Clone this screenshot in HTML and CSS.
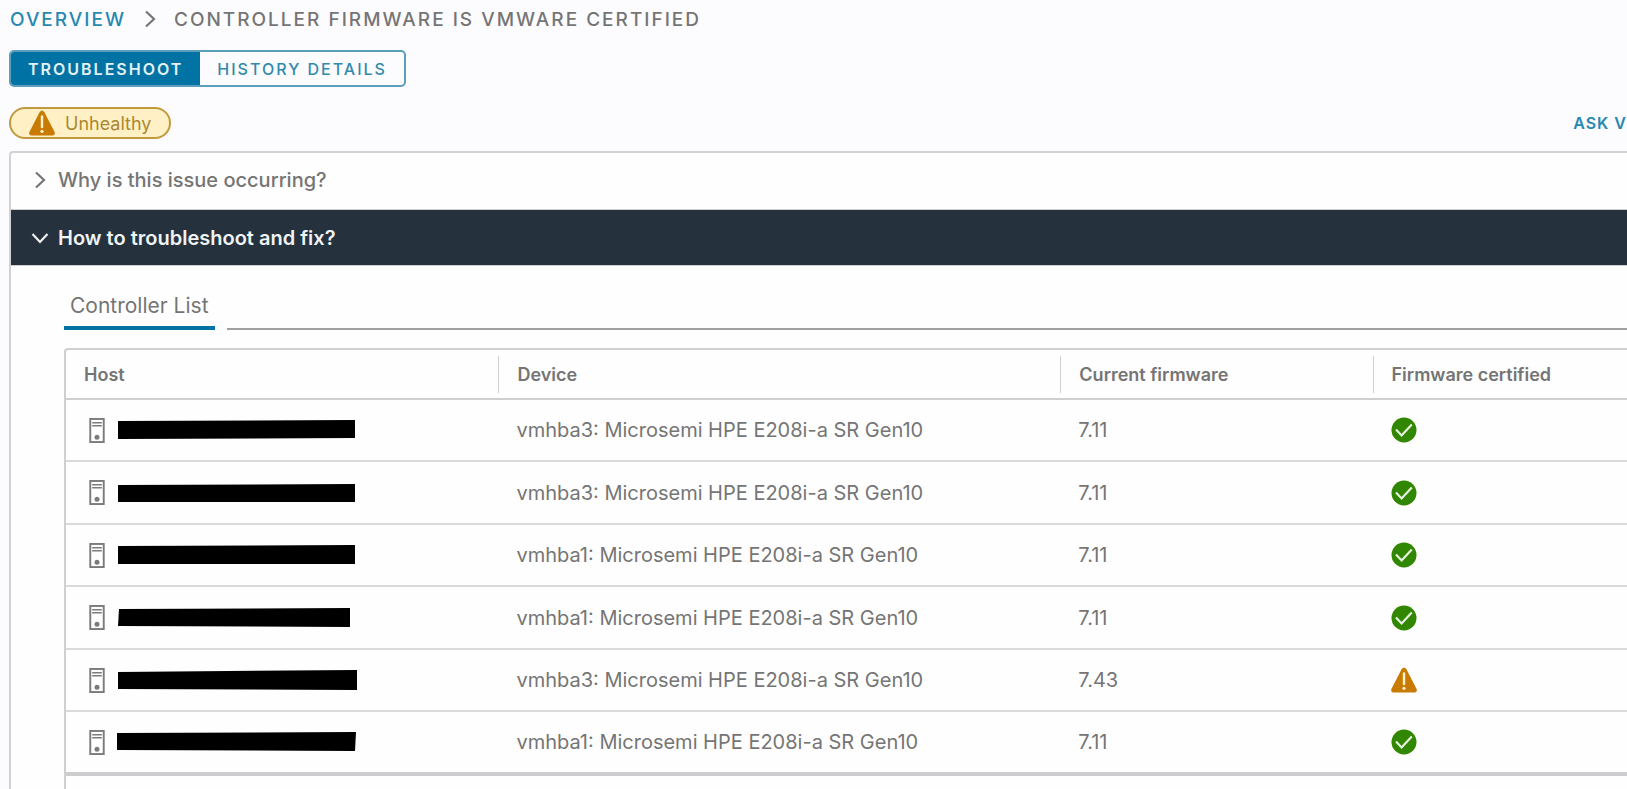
FILE: index.html
```html
<!DOCTYPE html>
<html lang="en">
<head>
    <meta charset="UTF-8">
    <meta name="viewport" content="width=device-width, initial-scale=1.0">
    <title>Controller firmware is VMware certified</title>
    <link rel="stylesheet" href="styles.css">
</head>
<body>
    <svg class="sprite" aria-hidden="true">
        <symbol id="host" viewBox="0 0 16 26">
            <rect x="1" y="1" width="14" height="24" fill="#fff" stroke="#7b7b7b" stroke-width="2"/>
            <path d="M3 5h10M3 8h10" stroke="#7b7b7b" stroke-width="1.6"/>
            <circle cx="8" cy="20" r="2.6" fill="#7b7b7b"/>
        </symbol>
        <symbol id="ok" viewBox="0 0 26 26">
            <circle cx="13" cy="13" r="12.5" fill="#318700"/>
            <path d="M5 12.500l5.600 6L20.800 7.500" fill="none" stroke="#e6f3df" stroke-width="2.200"/>
        </symbol>
        <symbol id="warn" viewBox="0 0 26 26">
            <path d="M10.700 2Q13-1 15.300 2L25.600 22Q26.500 25.500 23.500 25.500H2.500Q-.5 25.500.4 22Z" fill="#c87b00"/>
            <path d="M13 6.500v10.500" stroke="#fff3cf" stroke-width="2.400" stroke-linecap="round"/>
            <circle cx="13" cy="21.300" r="1.600" fill="#fff3cf"/>
        </symbol>
        <symbol id="angle" viewBox="0 0 18 18">
            <path d="M5 1.500l8 7.500-8 7.500" fill="none" stroke="currentColor" stroke-width="2.200"/>
        </symbol>
    </svg>

    <nav class="breadcrumb">
        <a href="#">OVERVIEW</a>
        <svg class="angle"><use href="#angle"/></svg>
        <span>CONTROLLER FIRMWARE IS VMWARE CERTIFIED</span>
    </nav>

    <div class="btn-group">
        <button class="btn active">TROUBLESHOOT</button>
        <button class="btn">HISTORY DETAILS</button>
    </div>

    <div class="status-bar">
        <span class="label-warning"><svg class="icon"><use href="#warn"/></svg>Unhealthy</span>
        <a href="#" class="ask">ASK V</a>
    </div>

    <main class="accordion">
        <button class="panel-header"><svg class="angle"><use href="#angle"/></svg>Why is this issue occurring?</button>
        <button class="panel-header open" aria-expanded="true"><svg class="angle"><use href="#angle"/></svg>How to troubleshoot and fix?</button>
        <div class="panel-content">
            <div class="tabs">
                <button class="tab">Controller List</button>
                <div class="tab-line"></div>
            </div>
            <div class="datagrid">
                <table>
                    <thead>
                        <tr>
                            <th class="col-host"><span>Host</span></th>
                            <th class="col-device"><span>Device</span></th>
                            <th class="col-current"><span>Current firmware</span></th>
                            <th><span>Firmware certified</span></th>
                        </tr>
                    </thead>
                    <tbody>
                        <tr>
                            <td><div class="host"><svg class="host-icon"><use href="#host"/></svg><svg class="redacted"><path d="M1 2L238 1V19L1 20Z"/></svg></div></td>
                            <td>vmhba3: Microsemi HPE E208i-a SR Gen10</td>
                            <td>7.11</td>
                            <td><svg class="icon"><use href="#ok"/></svg></td>
                        </tr>
                        <tr>
                            <td><div class="host"><svg class="host-icon"><use href="#host"/></svg><svg class="redacted"><path d="M1 3L238 2V20H1Z"/></svg></div></td>
                            <td>vmhba3: Microsemi HPE E208i-a SR Gen10</td>
                            <td>7.11</td>
                            <td><svg class="icon"><use href="#ok"/></svg></td>
                        </tr>
                        <tr>
                            <td><div class="host"><svg class="host-icon"><use href="#host"/></svg><svg class="redacted"><path d="M1 2L238 1V20H1Z"/></svg></div></td>
                            <td>vmhba1: Microsemi HPE E208i-a SR Gen10</td>
                            <td>7.11</td>
                            <td><svg class="icon"><use href="#ok"/></svg></td>
                        </tr>
                        <tr>
                            <td><div class="host"><svg class="host-icon"><use href="#host"/></svg><svg class="redacted"><path d="M2 2L233 1V20L1 19Z"/></svg></div></td>
                            <td>vmhba1: Microsemi HPE E208i-a SR Gen10</td>
                            <td>7.11</td>
                            <td><svg class="icon"><use href="#ok"/></svg></td>
                        </tr>
                        <tr>
                            <td><div class="host"><svg class="host-icon"><use href="#host"/></svg><svg class="redacted"><path d="M1 3L240 1V21L1 20Z"/></svg></div></td>
                            <td>vmhba3: Microsemi HPE E208i-a SR Gen10</td>
                            <td>7.43</td>
                            <td><svg class="icon"><use href="#warn"/></svg></td>
                        </tr>
                        <tr>
                            <td><div class="host"><svg class="host-icon"><use href="#host"/></svg><svg class="redacted"><path d="M0 2L239 1L238 20L0 19Z"/></svg></div></td>
                            <td>vmhba1: Microsemi HPE E208i-a SR Gen10</td>
                            <td>7.11</td>
                            <td><svg class="icon"><use href="#ok"/></svg></td>
                        </tr>
                    </tbody>
                </table>
            </div>
        </div>
    </main>
</body>
</html>
```

FILE: styles.css
```css
* {
    box-sizing: border-box;
}
body {
    display: flex;
    flex-direction: column;
    min-height: 100vh;
    margin: 0;
    padding: 0 0 0 9px;
    background-color: #fcfcff;
    color: #757575;
    font-family: Inter, "Liberation Sans", sans-serif;
    font-size: 20px;
}
a {
    color: #2788b0;
    text-decoration: none;
}
button {
    border: none;
    background: none;
    color: inherit;
    font: inherit;
    cursor: pointer;
}
.sprite {
    position: absolute;
    width: 0;
    height: 0;
}
.angle {
    width: 18px;
    height: 18px;
    flex-shrink: 0;
}
.icon {
    display: block;
    width: 26px;
    height: 26px;
}

.breadcrumb {
    display: flex;
    align-items: center;
    gap: 15px;
    height: 38px;
    padding-left: 1px;
    font-size: 19px;
    font-weight: 500;
    letter-spacing: 2px;
}

.btn-group {
    display: flex;
    align-self: flex-start;
    margin-top: 12px;
    height: 37px;
    border: 2px solid #5c9fbc;
    border-radius: 5px;
    overflow: hidden;
}
.btn {
    padding: 0 17px;
    color: #2f8aad;
    font-size: 16px;
    font-weight: 500;
    letter-spacing: 2px;
}
.btn.active {
    background-color: #0072a3;
    color: #e3f2f8;
    font-weight: 600;
}

.status-bar {
    display: flex;
    justify-content: space-between;
    align-items: center;
    height: 32px;
    margin: 20px 0 12px;
}
.label-warning {
    display: flex;
    align-items: center;
    gap: 10px;
    height: 32px;
    padding: 0 18px;
    border: 2px solid #c09a3c;
    border-radius: 16px;
    background-color: #fff1c5;
    color: #ac8732;
    font-size: 18px;
}
.ask {
    font-size: 16px;
    font-weight: 600;
    letter-spacing: 1px;
}

.accordion {
    display: flex;
    flex-direction: column;
    flex: 1;
    border: 1px solid #d2d2d4;
    border-width: 2px 0 0 2px;
    border-top-left-radius: 4px;
    background-color: #fefefe;
}
.panel-header {
    display: flex;
    align-items: center;
    gap: 9px;
    height: 57px;
    padding: 0 20px 2px;
    border-bottom: 1px solid #cfcfd2;
    font-weight: 500;
    text-align: left;
}
.panel-header.open {
    height: 56px;
    padding-bottom: 0;
    background-color: #25313d;
    color: #f0f2f4;
    font-weight: 600;
}
.panel-header.open .angle {
    transform: rotate(90deg);
}
.panel-content {
    display: flex;
    flex-direction: column;
    flex: 1;
    padding: 19px 0 0 53px;
}

.tabs {
    display: flex;
    gap: 12px;
}
.tab {
    height: 45px;
    padding: 0 6px;
    border-bottom: 4px solid #0072a3;
    font-size: 21px;
}
.tab-line {
    flex: 1;
    border-bottom: 2px solid #a0a0a0;
}

.datagrid {
    flex: 1;
    margin-top: 18px;
    border: 1px solid #cfcfcf;
    border-width: 2px 0 0 2px;
    border-top-left-radius: 4px;
}
table {
    width: 100%;
    table-layout: fixed;
    border-collapse: separate;
    border-spacing: 0;
}
.col-host {
    width: 27.7%;
}
.col-device {
    width: 36%;
}
.col-current {
    width: 20%;
}
th {
    height: 50px;
    padding: 0;
    border-bottom: 2px solid #cfcfcf;
    font-size: 18px;
    font-weight: 600;
    text-align: left;
}
th span {
    display: block;
    padding-left: 18px;
    border-left: 1px solid #cfcfcf;
    line-height: 37px;
}
th:first-child span {
    border-left: none;
}
td {
    height: 62px;
    padding: 0 0 0 18px;
    border-bottom: 2px solid #dadadc;
}
tr:nth-child(even) td {
    height: 63px;
}
tr:last-child td {
    height: 64px;
    border-bottom: 4px solid #cdcdcf;
}
.host {
    display: flex;
    align-items: center;
    gap: 12px;
    padding-left: 5px;
}
.host-icon {
    width: 16px;
    height: 25px;
}
.redacted {
    width: 240px;
    height: 22px;
    fill: #000;
}
```
